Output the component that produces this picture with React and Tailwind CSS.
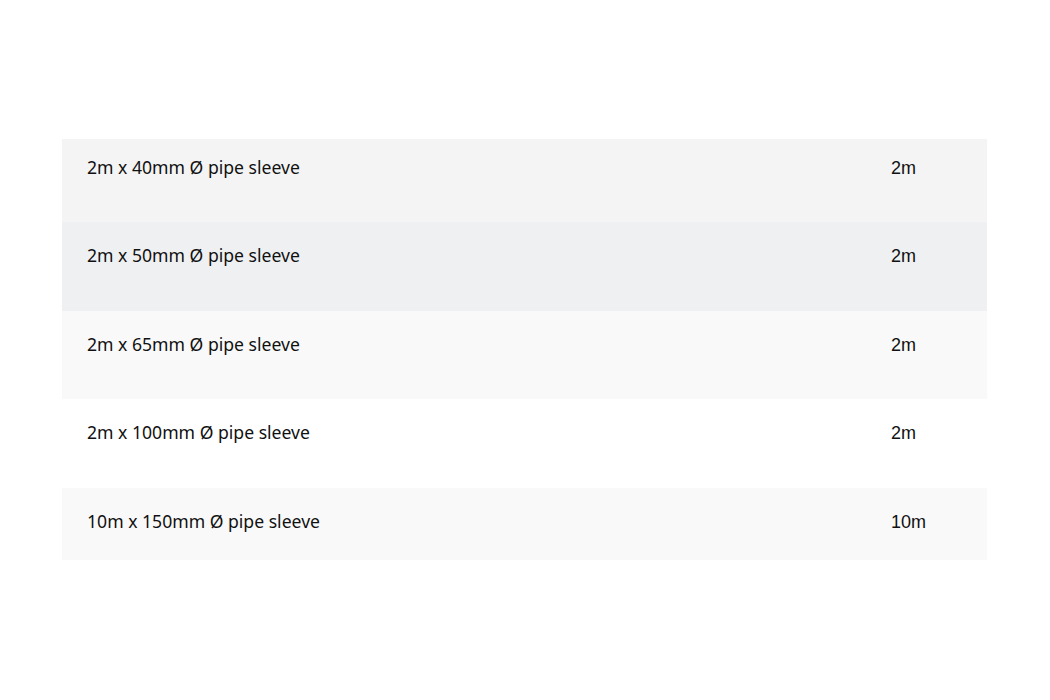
export default function App() {
  const rows = [
    { a: "2m x 40mm Ø pipe sleeve", b: "2m", bg: "bg-[#f4f4f4]", pad: "pt-[16px] pb-[43px]" },
    { a: "2m x 50mm Ø pipe sleeve", b: "2m", bg: "bg-[#eff0f1]", pad: "pt-[21px] pb-[44px]" },
    { a: "2m x 65mm Ø pipe sleeve", b: "2m", bg: "bg-[#f9f9f9]", pad: "pt-[21px] pb-[43px]" },
    { a: "2m x 100mm Ø pipe sleeve", b: "2m", bg: "bg-white", pad: "pt-[21px] pb-[44px]" },
    { a: "10m x 150mm Ø pipe sleeve", b: "10m", bg: "bg-[#f9f9f9]", pad: "pt-[21px] pb-[27px]" },
  ];
  return (
    <div className="w-[1050px] h-[700px] bg-white pt-[139px] pl-[62px]">
      <div className="w-[925px] flex flex-col">
        {rows.map((r, i) => (
          <div key={i} className={`flex ${r.bg} ${r.pad}`}>
            <div className="w-[829px] pl-[25px] text-[17.6px] leading-[24px] text-[#111]" style={{ fontFamily: '"Noto Sans", sans-serif' }}>
              {r.a}
            </div>
            <div className="pt-[2px] text-[18px] leading-[22px] text-[#111]" style={{ fontFamily: '"Liberation Sans", Arial, sans-serif' }}>
              {r.b}
            </div>
          </div>
        ))}
      </div>
    </div>
  );
}
